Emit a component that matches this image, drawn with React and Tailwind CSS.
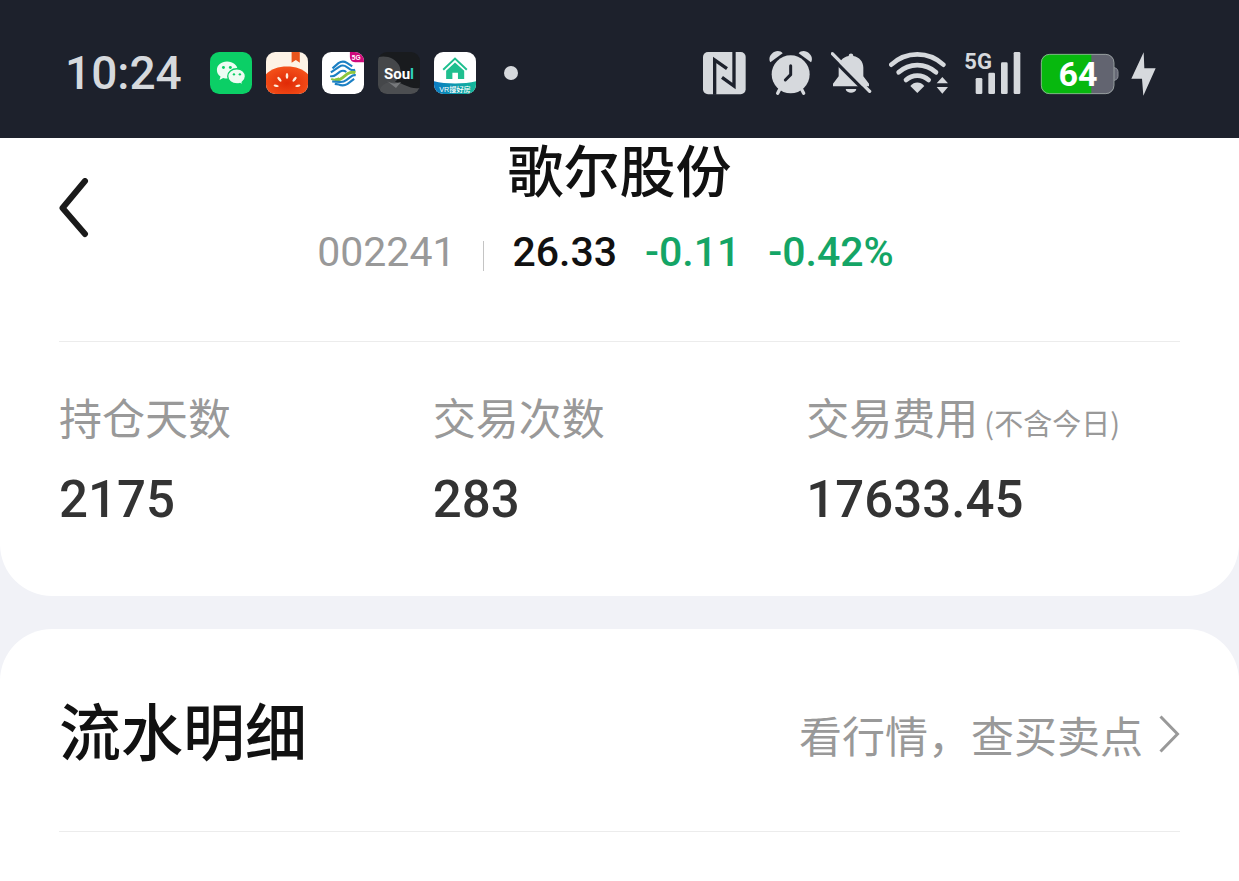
const CJK = 'font-["Noto_Sans_CJK_SC",sans-serif]';
const NUM = 'font-[Roboto,"Noto_Sans_CJK_SC",sans-serif]';

function WeChatIcon() {
  return (
    <svg viewBox="0 0 128 128" className="size-[42px] shrink-0" aria-label="WeChat">
      <rect width="128" height="128" rx="28" fill="#0bcf66" />
      <path d="M52 29c-18 0-31 11-31 26 0 8 4 15 11 20l-3 10 11-6c4 1 8 2 12 2 18 0 32-11 32-26S70 29 52 29Z" fill="#eefcf3" />
      <path d="M82 51c-16 0-28 10-28 23s12 23 28 23c3 0 6 0 9-1l9 5-2-9c6-4 10-10 10-18 0-13-11-23-26-23Z" fill="#eefcf3" stroke="#0bcf66" strokeWidth="4" />
      <g fill="#0bcf66">
        <circle cx="41" cy="47" r="4.5" />
        <circle cx="62" cy="47" r="4.5" />
        <circle cx="73" cy="68" r="3.6" />
        <circle cx="91" cy="68" r="3.6" />
      </g>
    </svg>
  );
}

function TomatoIcon() {
  return (
    <svg viewBox="0 0 128 128" className="size-[42px] shrink-0" aria-label="Tomato">
      <clipPath id="tomato-clip">
        <rect width="128" height="128" rx="28" />
      </clipPath>
      <radialGradient id="tomato-fill" cx="0.5" cy="0.6" r="0.6">
        <stop offset="0" stopColor="#e02a06" />
        <stop offset="1" stopColor="#f4511a" />
      </radialGradient>
      <g clipPath="url(#tomato-clip)">
        <rect width="128" height="128" fill="#fdf3e6" />
        <path d="M78 0h25v33l-12-9-13 9Z" fill="#e9541c" />
        <path d="M0 68C14 52 38 44 64 44s50 8 64 24v60H0Z" fill="url(#tomato-fill)" />
        <g fill="#fdeedd">
          <ellipse cx="64" cy="73" rx="4" ry="9" />
          <ellipse cx="41" cy="83" rx="4" ry="9" transform="rotate(-38 41 83)" />
          <ellipse cx="87" cy="83" rx="4" ry="9" transform="rotate(38 87 83)" />
          <ellipse cx="31" cy="103" rx="3.5" ry="8" transform="rotate(-78 31 103)" />
          <ellipse cx="97" cy="103" rx="3.5" ry="8" transform="rotate(78 97 103)" />
        </g>
      </g>
    </svg>
  );
}

function ChinaMobileIcon() {
  return (
    <svg viewBox="0 0 128 128" className="size-[42px] shrink-0" aria-label="China Mobile">
      <clipPath id="mobile-clip">
        <rect width="128" height="128" rx="28" />
      </clipPath>
      <g clipPath="url(#mobile-clip)">
        <rect width="128" height="128" fill="#fff" />
        <path d="M85 0h43v31H101C90 31 85 24 85 14Z" fill="#cf0a7c" />
        <text x="91" y="23" fontSize="20" fontWeight="700" fill="#fff" className='font-["Liberation_Sans",sans-serif]'>5G</text>
        <g fill="none" strokeWidth="6.5">
          <path d="M32 50 50 34q13-9 26-1l16 11" stroke="#1c80c4" />
          <path d="M27 62 52 45q12-8 24 1l10 7q8 4 15 1" stroke="#1c80c4" />
          <path d="M25 73q9 3 18-4l12-9q10-6 19 1" stroke="#1c80c4" />
          <path d="M28 82q13 6 24-3" stroke="#8cc63e" strokeWidth="6" />
          <path d="M40 84q12 3 22-5l16-13q12-7 24-3" stroke="#8cc63e" strokeWidth="9" />
          <path d="M103 71q-8-2-15 4L75 85q-11 8-22 6l-22-1" stroke="#1c80c4" />
          <path d="M98 82 78 97q-13 8-27 2l-12-2" stroke="#1c80c4" />
        </g>
      </g>
    </svg>
  );
}

function SoulIcon() {
  return (
    <svg viewBox="0 0 42 42" className="size-[42px] shrink-0" aria-label="Soul">
      <clipPath id="soul-clip">
        <rect width="42" height="42" rx="9" />
      </clipPath>
      <g clipPath="url(#soul-clip)">
        <rect width="42" height="42" fill="#191b1e" />
        <path d="M0 5c9-2 17 1 21 8 3 6 1 12-3 16-6 5-12 5-18 9Z" fill="#45474a" />
        <path d="M0 42c2-9 9-13 17-12 9 1 15 8 25 6v6Z" fill="#4c4e51" />
        <path d="M9 29c4 3 9 3 14 1l-5 6Z" fill="#77797c" />
      </g>
      <text x="6" y="27" fontSize="15" fontWeight="700" fill="#fff" className="font-[Roboto,sans-serif]">
        Sou<tspan fill="#2ed3bd">l</tspan>
      </text>
    </svg>
  );
}

function HouseIcon() {
  return (
    <svg viewBox="0 0 128 128" className="size-[42px] shrink-0" aria-label="VR搜好房">
      <clipPath id="house-clip">
        <rect width="128" height="128" rx="28" />
      </clipPath>
      <linearGradient id="house-fill">
        <stop offset="0" stopColor="#0a7ac4" />
        <stop offset="1" stopColor="#14b898" />
      </linearGradient>
      <g clipPath="url(#house-clip)">
        <rect width="128" height="128" fill="#fff" />
        <path d="M0 89C35 98 93 98 128 89v39H0Z" fill="url(#house-fill)" />
        <path d="M28 54 64 20l36 34" fill="none" stroke="#1fbf8f" strokeWidth="6" />
        <path d="M37 57 64 32l28 25v25H73V63H56v19H37Z" fill="#1fbf8f" />
        <text x="64" y="121" textAnchor="middle" fontSize="22" fontWeight="500" fill="#fff" className='font-["Liberation_Sans","Noto_Sans_CJK_SC",sans-serif]'>VR搜好房</text>
      </g>
    </svg>
  );
}

function NfcIcon() {
  return (
    <svg viewBox="39 18 141 162" className="h-[54px] w-[47px] shrink-0" aria-label="NFC">
      <rect x="39" y="36" width="128" height="127" rx="15" fill="#d6d9dd" />
      <path d="M74 164V60l37 26M132 35v103L96 112" fill="none" stroke="#1d212c" strokeWidth="10" />
    </svg>
  );
}

function AlarmIcon() {
  return (
    <svg viewBox="228 18 147 162" className="h-[54px] w-[49px] shrink-0" aria-label="Alarm">
      <g fill="#d6d9dd">
        <circle cx="302" cy="103" r="57" />
        <path d="M241 67c-7-12 0-26 13-32 9-4 19-2 24 5Z" />
        <path d="M363 67c7-12 0-26-13-32-9-4-19-2-24 5Z" />
      </g>
      <path d="m270 146-7 14M334 146l7 14" stroke="#d6d9dd" strokeWidth="10" strokeLinecap="round" />
      <path d="M302 77v27l-16 16" fill="none" stroke="#1d212c" strokeWidth="9" strokeLinecap="round" strokeLinejoin="round" />
    </svg>
  );
}

function BellOffIcon() {
  return (
    <svg viewBox="423 18 126 162" className="h-[54px] w-[42px] shrink-0" aria-label="Silent">
      <g fill="#d6d9dd">
        <path d="M476 48c0-10 14-10 14 0 18 3 30 17 30 35v26l17 22v8H429v-8l17-22V83c0-18 12-32 30-35Z" />
        <path d="M467 147h32c-2 15-30 15-32 0Z" />
      </g>
      <path d="m420 48 112 113" stroke="#1d212c" strokeWidth="10" />
      <path d="m427 41 112 113" stroke="#d6d9dd" strokeWidth="10" strokeLinecap="round" />
    </svg>
  );
}

function WifiIcon() {
  return (
    <svg viewBox="597 18 180 162" className="h-[54px] w-[60px] shrink-0" aria-label="Wi-Fi">
      <g fill="none" stroke="#d6d9dd" strokeWidth="14" strokeLinecap="round">
        <path d="M604 74a114 114 0 0 1 156 0" />
        <path d="M626 97a83 83 0 0 1 112 0" />
        <path d="M648 120a50 50 0 0 1 68 0" />
      </g>
      <path d="M682 159 661 138c12-14 30-14 42 0Z" fill="#d6d9dd" />
      <path d="m757 111 17 19h-34ZM757 161l17-20h-34Z" fill="#d6d9dd" />
    </svg>
  );
}

function SignalIcon() {
  return (
    <svg viewBox="105 18 180 162" className="h-[54px] w-[60px] shrink-0" aria-label="5G signal">
      <g fill="#d6d9dd">
        <text x="103" y="86" fontSize="66" fontWeight="700" className="font-[Roboto,sans-serif]">5G</text>
        <rect x="137" y="114" width="20" height="48" rx="4" />
        <rect x="175" y="98" width="20" height="64" rx="4" />
        <rect x="213" y="67" width="20" height="95" rx="4" />
        <rect x="251" y="36" width="20" height="126" rx="4" />
      </g>
    </svg>
  );
}

function BatteryIcon() {
  return (
    <svg viewBox="333 18 222 162" className="h-[54px] w-[74px] shrink-0 overflow-visible" aria-label="Battery 64%">
      <clipPath id="battery-clip">
        <rect x="333" y="42" width="220" height="120" rx="26" />
      </clipPath>
      <path d="M550 80q4 4 8 5 6 3 6 10v14q0 7-6 10-4 1-8 5Z" fill="#666875" stroke="#8d9099" strokeWidth="3" />
      <g clipPath="url(#battery-clip)">
        <rect x="333" y="42" width="220" height="120" fill="#626470" />
        <rect x="333" y="42" width="151" height="120" fill="#07b80e" />
      </g>
      <rect x="334" y="43" width="218" height="118" rx="25" fill="none" stroke="#a9b3b0" strokeOpacity="0.75" strokeWidth="3" />
      <text x="444" y="137" textAnchor="middle" fontSize="102" fontWeight="700" fill="#fff" className="font-[Roboto,sans-serif]">64</text>
    </svg>
  );
}

function BoltIcon() {
  return (
    <svg viewBox="603 18 78 162" className="h-[54px] w-[26px] shrink-0" aria-label="Charging">
      <path d="m641 37-37 79h32l4 51 37-82h-34Z" fill="#d6d9dd" />
    </svg>
  );
}

function StatusBar() {
  return (
    <div className="flex h-[138px] items-center justify-between bg-[#1d212c] pt-2 pr-[82px] pl-[65px]">
      <div className="flex items-center gap-3.5">
        <time className={`mr-3.5 text-[46px] leading-none font-medium text-[#d6d9dd] ${NUM}`}>10:24</time>
        <WeChatIcon />
        <TomatoIcon />
        <ChinaMobileIcon />
        <SoulIcon />
        <HouseIcon />
        <span className="ml-3.5 size-3.5 rounded-full bg-[#d6d9dd]" />
      </div>
      <div className="flex items-center gap-4">
        <NfcIcon />
        <AlarmIcon />
        <BellOffIcon />
        <WifiIcon />
        <SignalIcon />
        <BatteryIcon />
        <BoltIcon />
      </div>
    </div>
  );
}

function Stat({ label, note, value }) {
  return (
    <div>
      <dt className={`flex items-baseline gap-1.5 text-[43px] leading-[56px] whitespace-nowrap text-[#999] ${CJK}`}>
        {label}
        {note && <span className="text-[29px] leading-none">{note}</span>}
      </dt>
      <dd className={`mt-6 text-[51px] leading-[64px] font-medium text-[#333] ${NUM}`}>{value}</dd>
    </div>
  );
}

export default function App() {
  return (
    <div className={`min-h-screen bg-[#f1f2f7] ${CJK}`}>
      <StatusBar />
      <main className="flex flex-col gap-[33px]">
        <section className="rounded-b-[52px] bg-white px-[59px] pb-16">
          <header className="grid grid-cols-[30px_1fr_30px] items-start border-b border-[#ececec] pt-0.5 pb-[65px]">
            <button type="button" aria-label="返回" className="mt-[38px]">
              <svg viewBox="0 0 30 60" className="h-[60px] w-[30px]" fill="none" stroke="#1a1a1a" strokeWidth="6" strokeLinecap="round" strokeLinejoin="round">
                <path d="M26 3 3.500 30 26 56" />
              </svg>
            </button>
            <div className="flex flex-col items-center gap-8">
              <h1 className="text-[56px] leading-[56px] font-medium text-[#111]">歌尔股份</h1>
              <div className={`flex items-center gap-7 pr-7 text-[41px] leading-[48px] font-medium text-[#111] ${NUM}`}>
                <span className="font-normal text-[#999]">002241</span>
                <span className="mt-2 h-[30px] w-px bg-[#c4c4c4]" />
                <span>26.33</span>
                <span className="text-[#14a566]">-0.11</span>
                <span className="text-[#14a566]">-0.42%</span>
              </div>
            </div>
          </header>
          <dl className="grid grid-cols-3 pt-[46px]">
            <Stat label="持仓天数" value="2175" />
            <Stat label="交易次数" value="283" />
            <Stat label="交易费用" note="(不含今日)" value="17633.45" />
          </dl>
        </section>
        <section className="min-h-[252px] rounded-t-[52px] bg-white px-[59px] pt-[60px]">
          <div className="flex items-center justify-between border-b border-[#ececec] pb-[62px]">
            <h2 className="text-[62px] leading-[80px] font-medium text-[#111]">流水明细</h2>
            <a href="#quotes" className="mt-2.5 flex items-center gap-4 text-[43px] leading-[56px] text-[#999]">
              看行情，查买卖点
              <svg viewBox="0 0 21 38" className="h-[38px] w-[21px]" fill="none" stroke="#999" strokeWidth="3">
                <path d="m1.500 1.500 17 17.500-17 17.500" />
              </svg>
            </a>
          </div>
        </section>
      </main>
    </div>
  );
}
